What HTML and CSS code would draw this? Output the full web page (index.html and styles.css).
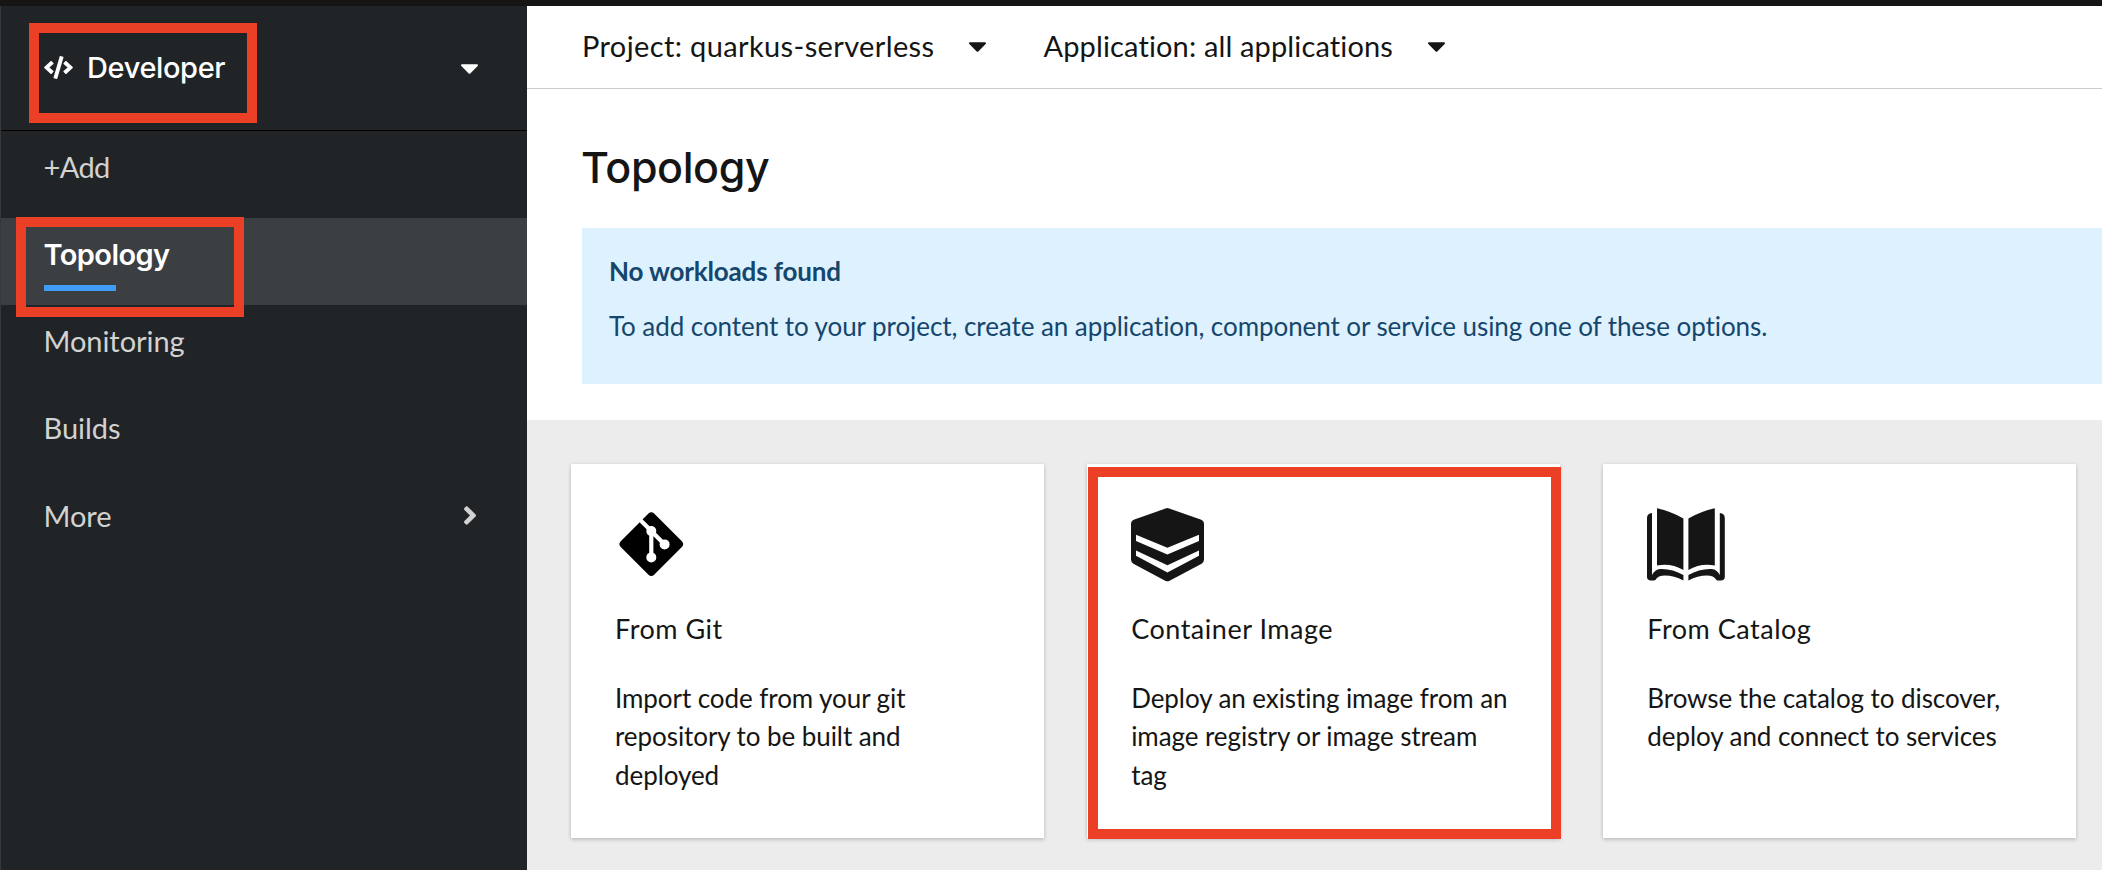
FILE: index.html
```
<!DOCTYPE html>
<html lang="en">
<head>
<meta charset="utf-8">
<title>Topology</title>
<link rel="stylesheet" href="styles.css">
</head>
<body>
<div class="masthead"></div>
<div class="page">
  <aside class="sidebar">
    <div class="switcher">
      <svg class="icon-code" viewBox="0 0 640 512"><path fill="currentColor" d="M278.9 511.5l-61-17.7c-6.4-1.8-10-8.5-8.2-14.9L346.2 8.7c1.8-6.4 8.5-10 14.9-8.2l61 17.7c6.4 1.8 10 8.5 8.2 14.9L293.8 503.3c-1.9 6.4-8.5 10.1-14.9 8.2zm-114-112.2l43.5-46.4c4.6-4.9 4.3-12.7-.8-17.2L117 256l90.6-79.7c5.1-4.5 5.5-12.3.8-17.2l-43.5-46.4c-4.5-4.8-12.1-5.1-17-.5L3.8 247.2c-5.1 4.7-5.1 12.8 0 17.5l144.1 135.1c4.9 4.6 12.5 4.4 17-.5zm327.2.6l144.1-135.1c5.1-4.7 5.1-12.8 0-17.5L492.1 112.1c-4.8-4.5-12.4-4.3-17 .5L431.6 159c-4.6 4.9-4.3 12.7.8 17.2L523 256l-90.6 79.7c-5.1 4.5-5.5 12.3-.8 17.2l43.5 46.4c4.5 4.9 12.1 5.1 17 .6z"/></svg>
      <span class="switcher-label">Developer</span>
      <svg class="caret" viewBox="11 192 298 169"><path fill="currentColor" d="M31.3 192h257.3c17.8 0 26.7 21.5 14.1 34.1L174.1 354.8c-7.8 7.8-20.5 7.8-28.3 0L17.2 226.1C4.6 213.5 13.5 192 31.3 192z"/></svg>
      <div class="highlight highlight-switcher"></div>
    </div>
    <nav class="nav">
      <a class="nav-item nav-add">+Add</a>
      <a class="nav-item active">Topology<span class="highlight highlight-nav"></span></a>
      <a class="nav-item">Monitoring</a>
      <a class="nav-item">Builds</a>
      <a class="nav-item">More
        <svg class="chevron" viewBox="24.5 96 207 320"><path fill="currentColor" d="M224.3 273l-136 136c-9.4 9.4-24.6 9.4-33.9 0l-22.6-22.6c-9.4-9.4-9.4-24.6 0-33.9l96.4-96.4-96.4-96.4c-9.4-9.4-9.4-24.6 0-33.9L54.3 103c9.4-9.4 24.6-9.4 33.9 0l136 136c9.5 9.4 9.5 24.6.1 34z"/></svg>
      </a>
    </nav>
  </aside>
  <main class="main">
    <div class="toolbar">
      <div class="selector project">
        <span>Project: quarkus-serverless</span>
        <svg class="caret" viewBox="11 192 298 169"><path fill="currentColor" d="M31.3 192h257.3c17.8 0 26.7 21.5 14.1 34.1L174.1 354.8c-7.8 7.8-20.5 7.8-28.3 0L17.2 226.1C4.6 213.5 13.5 192 31.3 192z"/></svg>
      </div>
      <div class="selector application">
        <span>Application: all applications</span>
        <svg class="caret" viewBox="11 192 298 169"><path fill="currentColor" d="M31.3 192h257.3c17.8 0 26.7 21.5 14.1 34.1L174.1 354.8c-7.8 7.8-20.5 7.8-28.3 0L17.2 226.1C4.6 213.5 13.5 192 31.3 192z"/></svg>
      </div>
    </div>
    <section class="intro">
      <h1 class="title">Topology</h1>
      <div class="alert">
        <h2 class="alert-title">No workloads found</h2>
        <p class="alert-text">To add content to your project, create an application, component or service using one of these options.</p>
      </div>
    </section>
    <section class="cards">
      <article class="card">
        <svg class="card-icon" viewBox="0 0 80 74">
          <rect x="12.7" y="12.5" width="47.2" height="47.2" rx="4" transform="rotate(45 36.3 36.1)" fill="#000"/>
          <g stroke="#fff" stroke-width="4.2" fill="none"><path d="M24 10.8 36.3 23.1 49.6 36.4M36.3 23.1V49.4"/></g>
          <g fill="#fff"><circle cx="36.3" cy="23.1" r="5"/><circle cx="49.6" cy="36.4" r="5"/><circle cx="36.3" cy="49.4" r="5"/></g>
        </svg>
        <h3 class="card-title">From Git</h3>
        <p class="card-text">Import code from your git repository to be built and deployed</p>
      </article>
      <article class="card">
        <svg class="card-icon" viewBox="0 0 80 74">
          <path fill="#151515" d="M34.6.4Q36.4-.2 38.2.4L69.6 11.6Q73 13 73 16.2V51.4Q73 54.2 70.6 55.8L38.6 72.7Q36.4 73.8 34.2 72.7L2.4 55.8Q0 54.2 0 51.4V16.2Q0 13 3.4 11.6Z"/>
          <path fill="#fff" d="M5 26.8 36.4 39.7 68 26.8V32.9L36.4 46.6 5 32.9ZM5 42.4 36.4 57.3 68 42.4V47.8L36.4 64.4 5 47.8Z"/>
        </svg>
        <h3 class="card-title">Container Image</h3>
        <p class="card-text">Deploy an existing image from an image registry or image stream tag</p>
        <div class="highlight highlight-card"></div>
      </article>
      <article class="card">
        <svg class="card-icon" viewBox="0 0 80 74">
          <defs><g id="book-half">
            <path d="M10 .3Q24 3.4 36.4 10.5V62Q24 54.6 10 57.4Z"/>
            <path d="M5 5V67Q8 61.5 13 61Q25 60.4 36.4 67V72.4Q27 67.6 18 67.6Q11 67.6 8.4 72Q7.6 72.6 4 72.5Q0 72.4 0 69V10Q0 5.6 5 5Z"/>
          </g></defs>
          <g fill="#151515"><use href="#book-half"/><use href="#book-half" transform="translate(77.8 0) scale(-1 1)"/></g>
        </svg>
        <h3 class="card-title">From Catalog</h3>
        <p class="card-text">Browse the catalog to discover, deploy and connect to services</p>
      </article>
    </section>
  </main>
</div>
</body>
</html>
```

FILE: styles.css
```
* { box-sizing: border-box; }
body {
  margin: 0;
  height: 870px;
  overflow: hidden;
  display: flex;
  flex-direction: column;
  background: #fff;
  color: #151515;
  font-family: Lato, "Liberation Sans", sans-serif;
}
h1, h2, h3, p { margin: 0; }
svg { display: block; flex: none; }
.masthead { height: 6px; flex: none; background: #151515; }
.page { flex: 1; display: flex; min-height: 0; }

.highlight { position: absolute; border: 10px solid #ec4026; }
.caret { width: 17px; height: 10px; }

/* Sidebar */
.sidebar {
  width: 527px;
  flex: none;
  background: #212427;
  border-left: 1px solid #36393c;
  color: #d2d2d2;
}
.switcher {
  position: relative;
  height: 125px;
  display: flex;
  align-items: center;
  padding: 0 49px 1px 43px;
  border-bottom: 1px solid #030303;
  color: #fff;
}
.icon-code { width: 29px; height: 23px; }
.switcher-label {
  flex: 1;
  margin-left: 14px;
  font: 500 29px Inter, sans-serif;
  letter-spacing: -0.38px;
}
.switcher .caret { margin-top: 2px; }
.highlight-switcher { left: 28px; top: 17px; width: 228px; height: 100px; }

.nav { display: flex; flex-direction: column; }
.nav-item {
  position: relative;
  height: 87.4px;
  display: flex;
  justify-content: space-between;
  padding: 0 51px 0 42.5px;
  font-size: 29px;
  line-height: 71px;
  letter-spacing: -0.05px;
}
.nav-add { height: 87px; letter-spacing: -0.6px; }
.nav-item.active {
  height: 87px;
  background: #3c3f42;
  color: #fff;
  font-family: Inter, sans-serif;
  font-weight: 600;
  line-height: 73px;
  letter-spacing: -0.6px;
}
.nav-item.active::after {
  content: "";
  position: absolute;
  left: 43px;
  top: 67px;
  width: 72px;
  height: 6px;
  background: #419cf7;
}
.highlight-nav { left: 15px; top: -1px; width: 228px; height: 100px; z-index: 1; }
.chevron { width: 12px; height: 19px; margin-top: 26px; }

/* Main */
.main { flex: 1; min-width: 0; display: flex; flex-direction: column; }
.toolbar {
  height: 83px;
  flex: none;
  display: flex;
  align-items: center;
  gap: 57px;
  padding: 0 0 3px 55px;
  border-bottom: 1px solid #ccc;
  font-size: 29px;
}
.selector { display: flex; align-items: center; gap: 35px; white-space: nowrap; }
.selector .caret { margin-top: 3px; }
.project { letter-spacing: 0.37px; }
.application { letter-spacing: 0.14px; }
.intro { height: 331px; flex: none; padding: 52px 0 0 55px; }
.title {
  margin: 0 0 35px -1px;
  font: 500 43px/52px Inter, sans-serif;
  letter-spacing: -0.4px;
}
.alert {
  height: 156px;
  padding: 24px 0 0 27px;
  background: #def1ff;
  color: #15466c;
}
.alert-title {
  margin-bottom: 16px;
  font-size: 26px;
  line-height: 39px;
  font-weight: 700;
  letter-spacing: -0.15px;
}
.alert-text { font-size: 26px; line-height: 39px; letter-spacing: -0.07px; }

/* Cards */
.cards {
  flex: 1;
  display: grid;
  grid-template-columns: repeat(3, 1fr);
  align-items: start;
  gap: 43.5px;
  padding: 44px 26px 0 44px;
  background: #ececec;
}
.card {
  position: relative;
  height: 374px;
  padding: 44px 46px 0 44px;
  background: #fff;
  box-shadow: 0 2px 4px rgba(3, 3, 3, 0.16), 0 0 4px rgba(3, 3, 3, 0.08);
}
.card-icon { width: 80px; height: 74px; margin-bottom: 27px; }
.card-title {
  margin: 0 0 30px;
  font-size: 27px;
  line-height: 40px;
  font-weight: 400;
  letter-spacing: 0.52px;
}
.card-text {
  font-size: 26px;
  line-height: 38.4px;
  letter-spacing: -0.07px;
}
.highlight-card { left: 1px; top: 3px; width: 473px; height: 372px; }
```
